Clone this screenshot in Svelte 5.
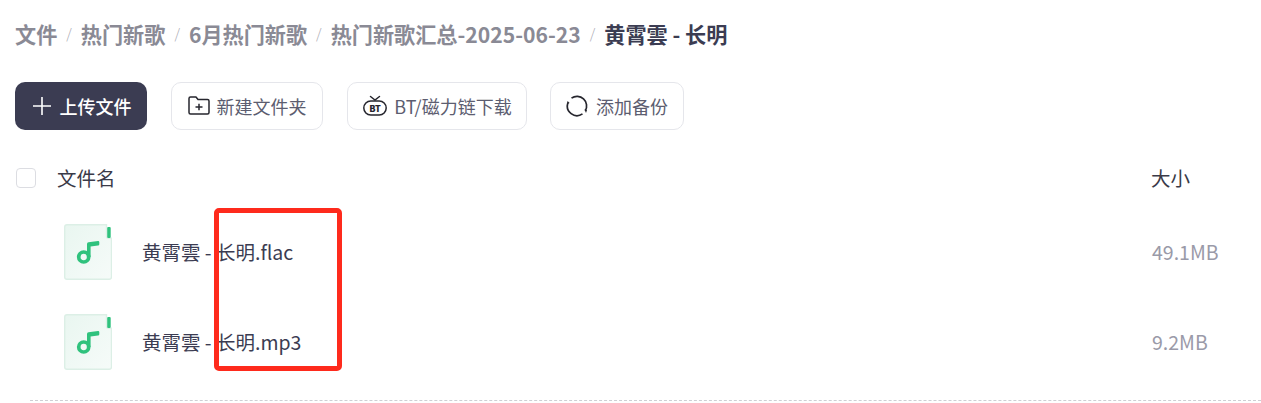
<script>
  const crumbs = ['文件', '热门新歌', '6月热门新歌', '热门新歌汇总-2025-06-23'];
  const files = [
    { name: '黄霄雲 - 长明.flac', size: '49.1MB' },
    { name: '黄霄雲 - 长明.mp3', size: '9.2MB' }
  ];
</script>

<div class="page">
  <nav class="crumbs">
    {#each crumbs as c}
      <span class="crumb">{c}</span>
      <span class="sep">/</span>
    {/each}
    <span class="crumb current">黄霄雲 - 长明</span>
  </nav>

  <div class="toolbar">
    <button class="upload">
      <svg width="20" height="20" viewBox="0 0 20 20" fill="none" stroke="currentColor" stroke-width="1.6">
        <path d="M10 1v18M1 10h18" />
      </svg>
      上传文件
    </button>
    <button class="tool folder">
      <svg width="22" height="20" viewBox="0 0 22 20" fill="none" stroke="#26262e" stroke-width="1.5" stroke-linejoin="round">
        <path d="M1 2.500q0-1.500 1.500-1.500h5.500l2 2.500h9.500q1.500 0 1.500 1.500v11.500q0 1.500-1.500 1.500h-17q-1.500 0-1.500-1.500z" />
        <path d="M7.500 11h7M11 7.800v6.400" />
      </svg>
      新建文件夹
    </button>
    <button class="tool bt">
      <svg width="26" height="22" viewBox="0 0 26 22" fill="none" stroke="#26262e" stroke-width="1.5">
        <path d="M8.500 1.500l4.500 3.500 4.500-3.500" stroke-linecap="round" />
        <rect x="1.800" y="6" width="22.400" height="14" rx="7" />
        <text x="13" y="16.500" class="bt-label">BT</text>
      </svg>
      BT/磁力链下载
    </button>
    <button class="tool backup">
      <svg width="22" height="22" viewBox="0 0 22 22" fill="none" stroke="#26262e" stroke-width="1.700">
        <path d="M5.500 3.100A9.600 9.600 0 0 1 19.300 15.800" />
        <path d="M16.500 18.900A9.600 9.600 0 0 1 2 7.700" />
        <path d="M18.500 14.500l2.500 .5-1 3zM.8 9l.8-3 2 2z" fill="#26262e" stroke="none" />
      </svg>
      添加备份
    </button>
  </div>

  <div class="head">
    <span class="check"></span>
    <span class="name-col">文件名</span>
    <span class="size-col">大小</span>
  </div>

  {#each files as f}
    <div class="row">
      <svg class="file-icon" width="48" height="56" viewBox="0 0 48 56">
        <defs>
          <linearGradient id="paper" x1="0" y1="0" x2="1" y2="1">
            <stop offset="0" stop-color="#e9f6f0" />
            <stop offset="1" stop-color="#f6fbf9" />
          </linearGradient>
        </defs>
        <path d="M3 .7h39.500v11.500q0 2 2 2h3V53q0 2.300-2.300 2.300H3Q.7 55.300 .7 53V3Q.7 .7 3 .7z" fill="url(#paper)" stroke="#dcefe6" stroke-width="1.400" />
        <rect x="43.200" y="3" width="3.500" height="11" rx="1" fill="#2fc27d" />
        <circle cx="19.700" cy="33" r="5" fill="none" stroke="#2fc27d" stroke-width="3.700" />
        <path d="M23 33V20q0-1.500 1.500-1.700L34 17q1.300-.1 1.300 1.200v2q0 1.200-1.300 1.300l-7.400 .9V33z" fill="#2fc27d" />
      </svg>
      <span class="file-name">{f.name}</span>
      <span class="file-size">{f.size}</span>
    </div>
  {/each}

  <div class="divider"></div>
  <div class="mark"></div>
</div>

<style>
  :global(body) {
    margin: 0;
    background: #fff;
  }

  .page {
    position: relative;
    height: 403px;
    overflow: hidden;
    padding-left: 15px;
    box-sizing: border-box;
    font-family: "Noto Sans CJK SC", "Noto Sans", sans-serif;
  }

  .crumbs {
    display: flex;
    align-items: center;
    gap: 9px;
    height: 30px;
    padding-top: 18px;
    padding-bottom: 1px;
    font-size: 21.15px;
    font-weight: 600;
    color: #8a8a95;
    white-space: nowrap;
  }

  .sep {
    font-size: 14px;
    font-weight: 300;
    color: #a9a9b2;
  }

  .current {
    color: #3b3c52;
    font-weight: 700;
  }

  .toolbar {
    display: flex;
    gap: 24px;
    margin-top: 33px;
  }

  button {
    display: flex;
    align-items: center;
    justify-content: center;
    height: 48px;
    box-sizing: border-box;
    font-family: inherit;
    font-size: 18px;
    padding: 0;
    white-space: nowrap;
  }

  .upload {
    width: 132px;
    gap: 8px;
    padding-left: 1px;
    border: 0;
    border-radius: 10px;
    background: #3b3c52;
    color: #fff;
    font-weight: 500;
  }

  .tool {
    gap: 7px;
    border: 1px solid #e5e6eb;
    border-radius: 10px;
    background: #fff;
    color: #5c5d70;
  }

  .folder { width: 152px; }
  .bt { width: 180px; gap: 6px; }
  .backup { width: 134px; gap: 8px; margin-left: -1px; }

  .bt-label {
    font-size: 9px;
    font-weight: 800;
    text-anchor: middle;
    fill: #26262e;
    stroke: none;
  }

  .head {
    display: flex;
    align-items: center;
    height: 20px;
    margin-top: 38px;
    padding-left: 1px;
    font-size: 19.5px;
    color: #3a3a48;
  }

  .check {
    width: 20px;
    height: 20px;
    box-sizing: border-box;
    border: 1px solid #dcdde2;
    border-radius: 4px;
  }

  .name-col {
    margin-left: 21px;
    padding-bottom: 2px;
  }

  .size-col {
    position: absolute;
    left: 1151px;
    padding-bottom: 2px;
  }

  .row {
    display: flex;
    align-items: center;
    height: 56px;
    margin-top: 34px;
    padding-left: 49px;
    font-size: 19.5px;
  }

  .head + .row {
    margin-top: 36px;
  }

  .file-name {
    margin-left: 30px;
    padding-bottom: 2px;
    color: #3b3c52;
  }

  .file-size {
    position: absolute;
    left: 1152px;
    padding-bottom: 2px;
    color: #9a9aa8;
  }

  .divider {
    position: absolute;
    left: 30px;
    right: 0;
    top: 400px;
    border-top: 1px dashed #cfcfd4;
  }

  /* red annotation drawn on top of the screenshot */
  .mark {
    position: absolute;
    left: 214px;
    top: 208px;
    width: 128px;
    height: 163px;
    box-sizing: border-box;
    border: 5px solid #fe2a1c;
    border-radius: 5px;
  }
</style>
